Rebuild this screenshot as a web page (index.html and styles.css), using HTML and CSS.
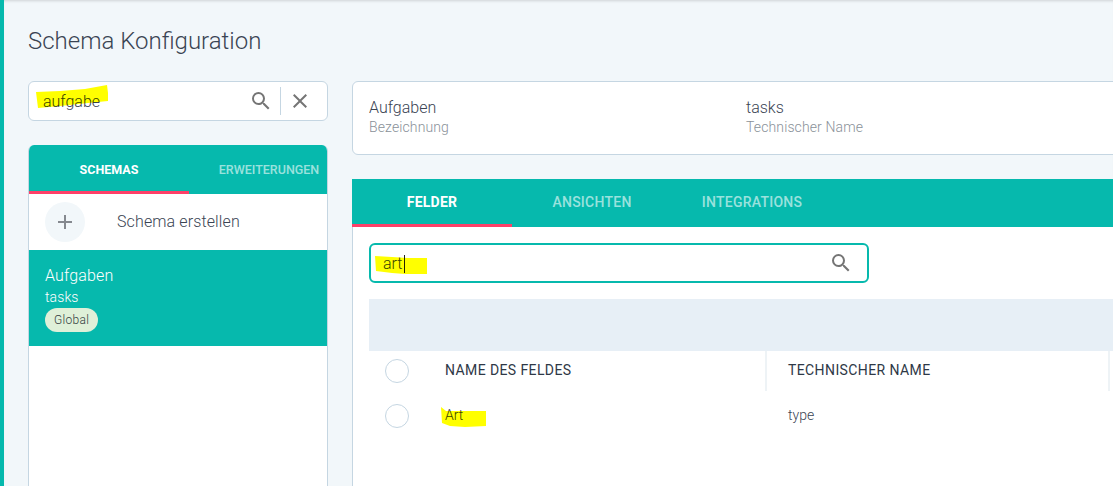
FILE: index.html
```html
<!DOCTYPE html>
<html lang="de">
<head>
    <meta charset="UTF-8">
    <meta name="viewport" content="width=device-width, initial-scale=1.0">
    <title>Schema Konfiguration</title>
    <link rel="stylesheet" href="styles.css">
</head>
<body>
    <div class="page">
        <h1 class="page-title">Schema Konfiguration</h1>

        <div class="columns">
            <aside class="sidebar">
                <div class="search-box">
                    <span class="search-value">aufgabe</span>
                    <svg class="icon" viewBox="0 0 24 24"><path d="M15.5 14h-.79l-.28-.27A6.47 6.47 0 0 0 16 9.5 6.5 6.5 0 1 0 9.5 16c1.61 0 3.09-.59 4.23-1.57l.27.28v.79l5 4.99L20.49 19l-4.99-5zm-6 0C7.01 14 5 11.99 5 9.5S7.01 5 9.5 5 14 7.01 14 9.5 11.99 14 9.5 14z"/></svg>
                    <span class="search-divider"></span>
                    <svg class="icon" viewBox="0 0 24 24"><path d="M19 6.41 17.59 5 12 10.59 6.41 5 5 6.41 10.59 12 5 17.59 6.41 19 12 13.41 17.59 19 19 17.59 13.41 12z"/></svg>
                </div>

                <div class="schema-card">
                    <div class="tabs tabs-small">
                        <div class="tab active">Schemas</div>
                        <div class="tab">Erweiterungen</div>
                    </div>
                    <div class="create-row">
                        <span class="create-circle">
                            <svg viewBox="0 0 24 24"><path d="M19 13h-6v6h-2v-6H5v-2h6V5h2v6h6v2z"/></svg>
                        </span>
                        <span class="create-label">Schema erstellen</span>
                    </div>
                    <div class="schema-item">
                        <div class="schema-name">Aufgaben</div>
                        <div class="schema-key">tasks</div>
                        <span class="badge">Global</span>
                    </div>
                </div>
            </aside>

            <main class="content">
                <div class="info-card">
                    <div>
                        <div class="info-value">Aufgaben</div>
                        <div class="info-label">Bezeichnung</div>
                    </div>
                    <div>
                        <div class="info-value">tasks</div>
                        <div class="info-label">Technischer Name</div>
                    </div>
                </div>

                <div class="fields-card">
                    <div class="tabs tabs-large">
                        <div class="tab active">Felder</div>
                        <div class="tab">Ansichten</div>
                        <div class="tab">Integrations</div>
                    </div>
                    <div class="fields-body">
                        <div class="field-search">
                            <span class="field-search-value">art<span class="caret"></span></span>
                            <svg class="icon" viewBox="0 0 24 24"><path d="M15.5 14h-.79l-.28-.27A6.47 6.47 0 0 0 16 9.5 6.5 6.5 0 1 0 9.5 16c1.61 0 3.09-.59 4.23-1.57l.27.28v.79l5 4.99L20.49 19l-4.99-5zm-6 0C7.01 14 5 11.99 5 9.5S7.01 5 9.5 5 14 7.01 14 9.5 11.99 14 9.5 14z"/></svg>
                        </div>
                        <div class="table-band"></div>
                        <div class="table-row table-head">
                            <span class="check"></span>
                            <span class="cell-name">Name des Feldes</span>
                            <span class="cell-key">Technischer Name</span>
                        </div>
                        <div class="table-row">
                            <span class="check"></span>
                            <span class="cell-name">Art</span>
                            <span class="cell-key">type</span>
                        </div>
                    </div>
                </div>
            </main>
        </div>
    </div>

    <!-- yellow marker strokes drawn over the screenshot -->
    <svg class="marker" viewBox="0 0 1113 486">
        <path d="M36 92 L60 91 L85 89 L107 85 L108 93 L108 101 L88 103 L60 106 L38 108 Z"/>
        <path d="M375 256 L392 257 L408 258 L427 258 L427 274 L405 274 L392 273 L376 271 Z"/>
        <path d="M441 407 L446 411 L486 411 L486 426 L465 427 L450 426 L442 423 Z"/>
    </svg>
</body>
</html>
```

FILE: styles.css
```css
* {
    margin: 0;
    padding: 0;
    box-sizing: border-box;
}

html, body {
    height: 100%;
    overflow: hidden;
}

body {
    background: #f2f7fa;
    color: #3a4453;
    font-family: Roboto, sans-serif;
    font-weight: 300;
    border-left: 4px solid #06b9ad;
    box-shadow: inset 0 3px 3px -2px rgba(0, 0, 0, 0.15);
}

.page {
    padding: 26px 0 0 24px;
}

.page-title {
    font-size: 24px;
    font-weight: 300;
    line-height: 30px;
    height: 55px;
}

.columns {
    display: grid;
    grid-template-columns: 300px 900px;
    gap: 24px;
}

.icon {
    width: 24px;
    height: 24px;
    fill: #757575;
    flex: none;
}

/* sidebar */
.search-box {
    display: flex;
    align-items: center;
    height: 40px;
    padding: 0 15px 0 14px;
    background: #fff;
    border: 1px solid #c5d6e2;
    border-radius: 6px;
}

.search-value {
    flex: 1;
    font-size: 16px;
    padding-top: 1px;
}

.search-divider {
    width: 1px;
    height: 28px;
    margin: 0 7px;
    background: #c5d6e2;
}

.schema-card {
    height: 400px;
    margin-top: 24px;
    background: #fff;
    border: 1px solid #c5d6e2;
    border-top: none;
    border-radius: 6px 6px 0 0;
    overflow: hidden;
}

.tabs {
    display: flex;
    background: #06b9ad;
}

.tab {
    flex: 0 0 160px;
    text-align: center;
    text-transform: uppercase;
    font-weight: 500;
    color: rgba(255, 255, 255, 0.6);
    border-bottom: 3px solid transparent;
}

.tab.active {
    color: #fff;
    font-weight: 700;
    border-bottom-color: #ff4069;
}

.tabs-small .tab {
    height: 49px;
    line-height: 50px;
    font-size: 12.5px;
}

.tabs-large .tab {
    height: 48px;
    line-height: 46px;
    font-size: 14px;
    letter-spacing: 0.25px;
}

.create-row {
    display: flex;
    align-items: center;
    height: 56px;
    padding-left: 16px;
}

.create-circle {
    display: flex;
    align-items: center;
    justify-content: center;
    width: 40px;
    height: 40px;
    border-radius: 50%;
    background: #f2f7fa;
}

.create-circle svg {
    width: 24px;
    height: 24px;
    fill: #85898f;
}

.create-label {
    margin-left: 32px;
    margin-bottom: 2px;
    font-size: 16px;
    letter-spacing: 0.12px;
}

.schema-item {
    height: 96px;
    padding: 16px 16px 0;
    background: #06b9ad;
    color: #fff;
}

.schema-name {
    font-size: 16px;
    line-height: 20px;
    letter-spacing: 0.15px;
}

.schema-key {
    font-size: 14px;
    line-height: 20px;
    margin-top: 1px;
    font-weight: 300;
    letter-spacing: 0.1px;
}

.badge {
    display: inline-block;
    height: 24px;
    margin-top: 1px;
    padding: 0 9px;
    line-height: 24px;
    font-size: 12px;
    font-weight: 300;
    letter-spacing: 0.3px;
    color: #333d40;
    background: #dff0d8;
    border-radius: 12px;
}

/* content */
.info-card {
    display: grid;
    grid-template-columns: 377px 377px;
    height: 74px;
    padding: 16px 16px 0;
    background: #fff;
    border: 1px solid #c5d6e2;
    border-radius: 6px;
}

.info-value {
    font-size: 16px;
    line-height: 19px;
}

.info-label {
    margin-top: 1px;
    font-size: 14px;
    line-height: 18px;
    letter-spacing: 0.12px;
    color: #8a9199;
}

.fields-card {
    height: 400px;
    margin-top: 24px;
    background: #fff;
    border-left: 1px solid #c5d6e2;
}

.fields-card .tabs {
    margin-left: -1px;
}

.fields-body {
    padding: 16px;
}

.field-search {
    display: flex;
    align-items: center;
    justify-content: space-between;
    width: 500px;
    height: 40px;
    padding: 0 14px 0 12px;
    border: 2px solid #06b9ad;
    border-radius: 6px;
}

.field-search-value {
    font-size: 16px;
    padding-top: 1px;
}

.caret {
    display: inline-block;
    width: 1px;
    height: 18px;
    margin-left: 1px;
    background: #222;
    vertical-align: -4px;
}

.table-band {
    height: 52px;
    margin-top: 16px;
    background: #e7eff6;
}

.table-row {
    display: flex;
    align-items: center;
    height: 50px;
    font-size: 14px;
}

.table-head {
    height: 40px;
    font-size: 14px;
    font-weight: 400;
    letter-spacing: 0.4px;
    text-transform: uppercase;
    color: #2e3846;
}

.table-row .check {
    flex: none;
    width: 24px;
    height: 24px;
    margin-left: 16px;
    border: 1px solid #c5d6e2;
    border-radius: 50%;
}

.cell-name {
    width: 322px;
    margin-left: 36px;
    margin-bottom: 2px;
}

.cell-key {
    width: 343px;
    margin-bottom: 2px;
    padding-left: 21px;
}

.table-head .cell-name,
.table-head .cell-key {
    height: 40px;
    margin-bottom: 0;
    line-height: 38px;
    border-right: 2px solid #eef3f6;
}

.marker {
    position: fixed;
    top: 0;
    left: 0;
    width: 1113px;
    height: 486px;
    pointer-events: none;
    mix-blend-mode: multiply;
}

.marker path {
    fill: #ffff00;
}
```
